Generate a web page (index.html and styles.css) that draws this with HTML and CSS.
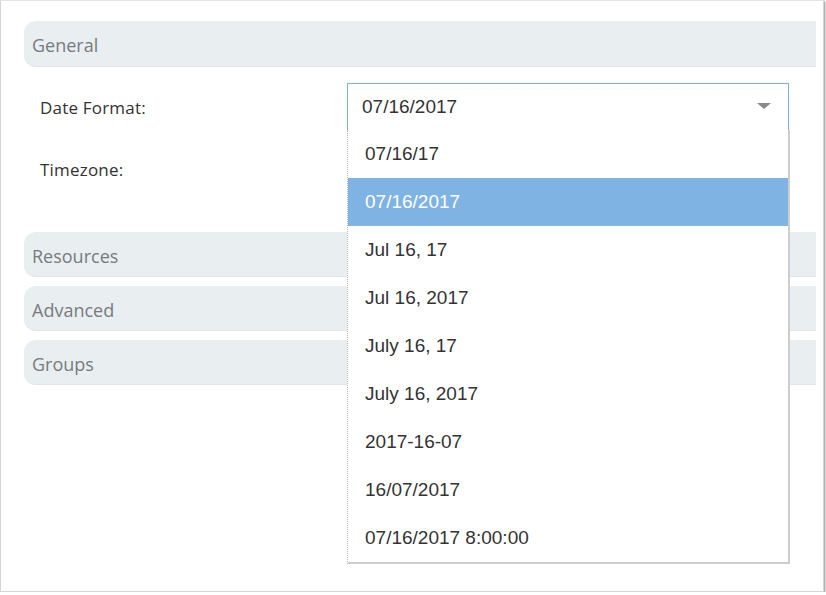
FILE: index.html
```html
<!DOCTYPE html>
<html>
<head>
<meta charset="utf-8">
<link rel="stylesheet" href="styles.css">
</head>
<body>
<div class="frame">
  <div class="section">
    <div class="section-head">General</div>
    <div class="section-body">
      <div class="row">
        <div class="label">Date Format:</div>
        <div class="select open">
          <span class="value">07/16/2017</span>
          <span class="arrow"></span>
          <ul class="list">
            <li>07/16/17</li>
            <li class="selected">07/16/2017</li>
            <li>Jul 16, 17</li>
            <li>Jul 16, 2017</li>
            <li>July 16, 17</li>
            <li>July 16, 2017</li>
            <li>2017-16-07</li>
            <li>16/07/2017</li>
            <li>07/16/2017 8:00:00</li>
          </ul>
        </div>
      </div>
      <div class="row">
        <div class="label">Timezone:</div>
        <div class="select"><span class="value"></span></div>
      </div>
    </div>
  </div>
  <div class="section"><div class="section-head">Resources</div></div>
  <div class="section"><div class="section-head">Advanced</div></div>
  <div class="section"><div class="section-head">Groups</div></div>
</div>
</body>
</html>
```

FILE: styles.css
```css
html, body {
  margin: 0;
  padding: 0;
  background: #ffffff;
}
.frame {
  box-sizing: border-box;
  width: 824px;
  height: 592px;
  border: 1px solid #d4d4d4;
  border-top-color: #e4e4e4;
  box-shadow: 1px 1px 2px rgba(0,0,0,0.45);
  padding: 20px 7px 0 23px;
  display: flex;
  flex-direction: column;
  gap: 9px;
  overflow: hidden;
}
.section-head {
  height: 46px;
  box-sizing: border-box;
  background: #e9eef1;
  border-bottom: 1px solid #dfe5e8;
  border-radius: 12px 0 0 12px;
  padding: 3px 0 0 8px;
  display: flex;
  align-items: center;
  font-family: "Open Sans", "Noto Sans", sans-serif;
  font-size: 18px;
  color: #777b7e;
}
.section:nth-child(n+2) .section-head {
  height: 45px;
}
.section-body {
  padding: 16px 0 31px 16px;
  display: flex;
  flex-direction: column;
  gap: 15px;
}
.row {
  display: flex;
  align-items: center;
}
.label {
  width: 307px;
  padding-top: 2px;
  font-family: "Open Sans", "Noto Sans", sans-serif;
  font-size: 17px;
  color: #333;
  letter-spacing: 0.2px;
}
.select {
  position: relative;
  box-sizing: border-box;
  width: 442px;
  height: 47px;
  border: 1px solid #cccccc;
  display: flex;
  align-items: center;
  padding-left: 14px;
  font-family: "Liberation Sans", Arial, sans-serif;
  font-size: 19px;
  color: #333;
}
.select.open {
  border-color: #7aaee0;
  border-bottom: none;
  z-index: 2;
}
.arrow {
  position: absolute;
  right: 17px;
  top: 19px;
  width: 0;
  height: 0;
  border-left: 7px solid transparent;
  border-right: 7px solid transparent;
  border-top: 6px solid #8a8a8a;
}
.list {
  position: absolute;
  left: -1px;
  top: 46px;
  width: 443px;
  margin: 0;
  padding: 0;
  list-style: none;
  background: #fff;
  border-left: 1px dotted #b8b8b8;
  border-right: 2px solid #cdcdcd;
  border-bottom: 2px solid #cdcdcd;
  box-sizing: border-box;
}
.list li {
  height: 48px;
  display: flex;
  align-items: center;
  padding-left: 17px;
  padding-bottom: 1px;
  box-sizing: border-box;
  font-family: "Liberation Sans", Arial, sans-serif;
  font-size: 19px;
  color: #333;
}
.list li.selected {
  background: #7fb3e3;
  color: #fff;
}
```
